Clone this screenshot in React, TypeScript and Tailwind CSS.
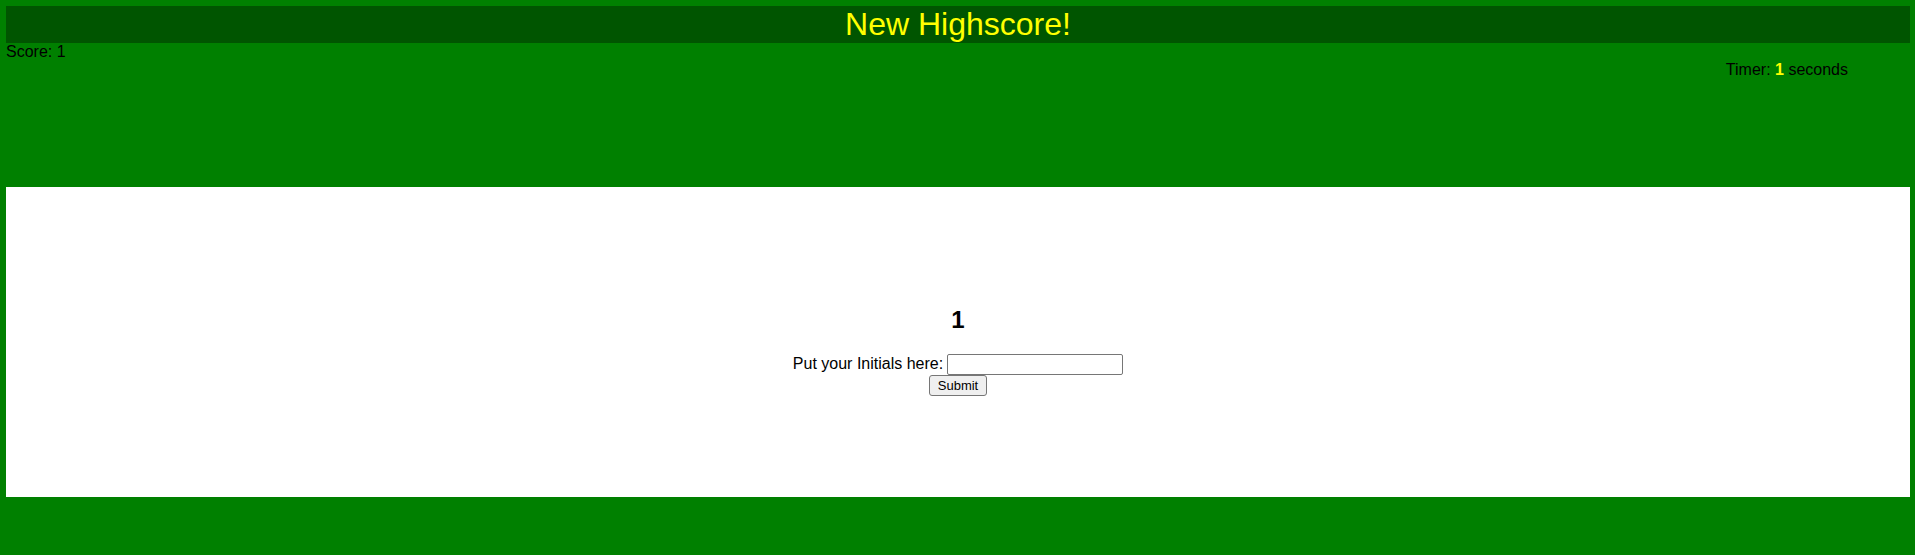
import React, { useState } from "react";

const App = () => {
  const [initials, setInitials] = useState("");
  const score = 1;
  const timeLeft = 1;

  return (
    <div
      className="min-h-[555px] bg-[#008000] pt-[6px] pl-[6px] pr-[5px] text-black text-[16px] leading-[18px]"
      style={{ fontFamily: '"Liberation Sans", Arial, sans-serif' }}
    >
      <h1 className="bg-[#005500] text-[#ffff00] text-center text-[32px] leading-[37px] h-[37px]">
        New Highscore!
      </h1>
      <div className="h-[18px]">Score: {score}</div>
      <div className="flex justify-end pr-[62px] h-[18px]">
        <span>
          Timer: <span className="text-[#ffff00] font-bold">{timeLeft}</span> seconds
        </span>
      </div>
      <div className="mt-[108px] bg-white h-[310px] flex flex-col items-center pt-[119px]">
        <h2 className="text-[24px] leading-[27px] font-bold">1</h2>
        <form
          className="mt-[19px] flex flex-col items-center"
          onSubmit={(e) => e.preventDefault()}
        >
          <div className="flex items-end h-[23px]">
            <label className="mr-[4px] leading-[18px] pb-[2px]">Put your Initials here:</label>
            <input
              type="text"
              value={initials}
              onChange={(e) => setInitials(e.target.value)}
              className="w-[176px] h-[21px] border border-[#767676] rounded-[2px] px-[2px] text-[13px] bg-white"
            />
          </div>
          <button
            type="submit"
            className="h-[21px] w-[58px] border border-[#767676] rounded-[3px] bg-[#efefef] text-[13px] leading-[15px]"
          >
            Submit
          </button>
        </form>
      </div>
    </div>
  );
};

export default App;
